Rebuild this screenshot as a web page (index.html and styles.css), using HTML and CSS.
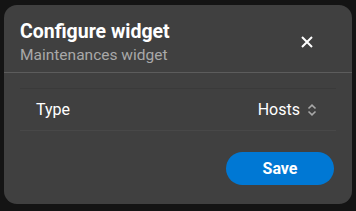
FILE: index.html
```html
<!DOCTYPE html>
<html>
<head>
<meta charset="utf-8">
<link rel="stylesheet" href="styles.css">
</head>
<body>
<div class="dialog">
  <div class="header">
    <div class="titles">
      <div class="title">Configure widget</div>
      <div class="subtitle">Maintenances widget</div>
    </div>
    <button class="close" aria-label="Close">
      <svg width="12" height="12" viewBox="0 0 12 12"><path d="M1 1 L11 11 M11 1 L1 11" stroke="#fff" stroke-width="2" fill="none"/></svg>
    </button>
  </div>
  <div class="body">
    <div class="row">
      <span class="label">Type</span>
      <span class="value">Hosts
        <svg class="chev" width="10" height="12" viewBox="0 0 10 12"><path d="M1.5 4.5 L5 1.2 L8.5 4.5 M1.5 7.5 L5 10.8 L8.5 7.5" stroke="#a8a8a8" stroke-width="1.6" fill="none"/></svg>
      </span>
    </div>
  </div>
  <div class="footer">
    <button class="save">Save</button>
  </div>
</div>
</body>
</html>
```
FILE: styles.css
```css
html, body { margin: 0; padding: 0; }
body {
  background: #141414;
  padding: 5px 4px;
  font-family: Roboto, "Liberation Sans", sans-serif;
  color: #fff;
}
.dialog {
  width: 348px;
  height: 199px;
  box-sizing: border-box;
  background: #404040;
  border-radius: 13px;
  display: flex;
  flex-direction: column;
}
.header {
  display: flex;
  align-items: center;
  justify-content: space-between;
  padding: 14px 39px 7px 16px;
  border-bottom: 1px solid #5c5c5c;
}
.title {
  font-size: 19.5px;
  font-weight: 700;
  line-height: 26px;
}
.subtitle {
  font-size: 15.5px;
  line-height: 20px;
  color: #a9a9a9;
}
.close {
  background: none;
  border: 0;
  padding: 0;
  width: 12px;
  height: 12px;
  display: flex;
}
.body {
  padding: 15px 16px 0;
}
.row {
  height: 43px;
  box-sizing: border-box;
  border-top: 1px solid #3a3a3a;
  border-bottom: 1px solid #484848;
  display: flex;
  align-items: center;
  justify-content: space-between;
  padding: 0 19px 0 16px;
  font-size: 16px;
}
.value {
  display: flex;
  align-items: center;
  gap: 7px;
}
.footer {
  display: flex;
  justify-content: flex-end;
  padding: 21px 18px 0;
}
.save {
  width: 108px;
  height: 33px;
  border: 0;
  border-radius: 17px;
  background: #0078d4;
  color: #fff;
  font-family: Roboto, "Liberation Sans", sans-serif;
  font-size: 16px;
  font-weight: 700;
}
```
